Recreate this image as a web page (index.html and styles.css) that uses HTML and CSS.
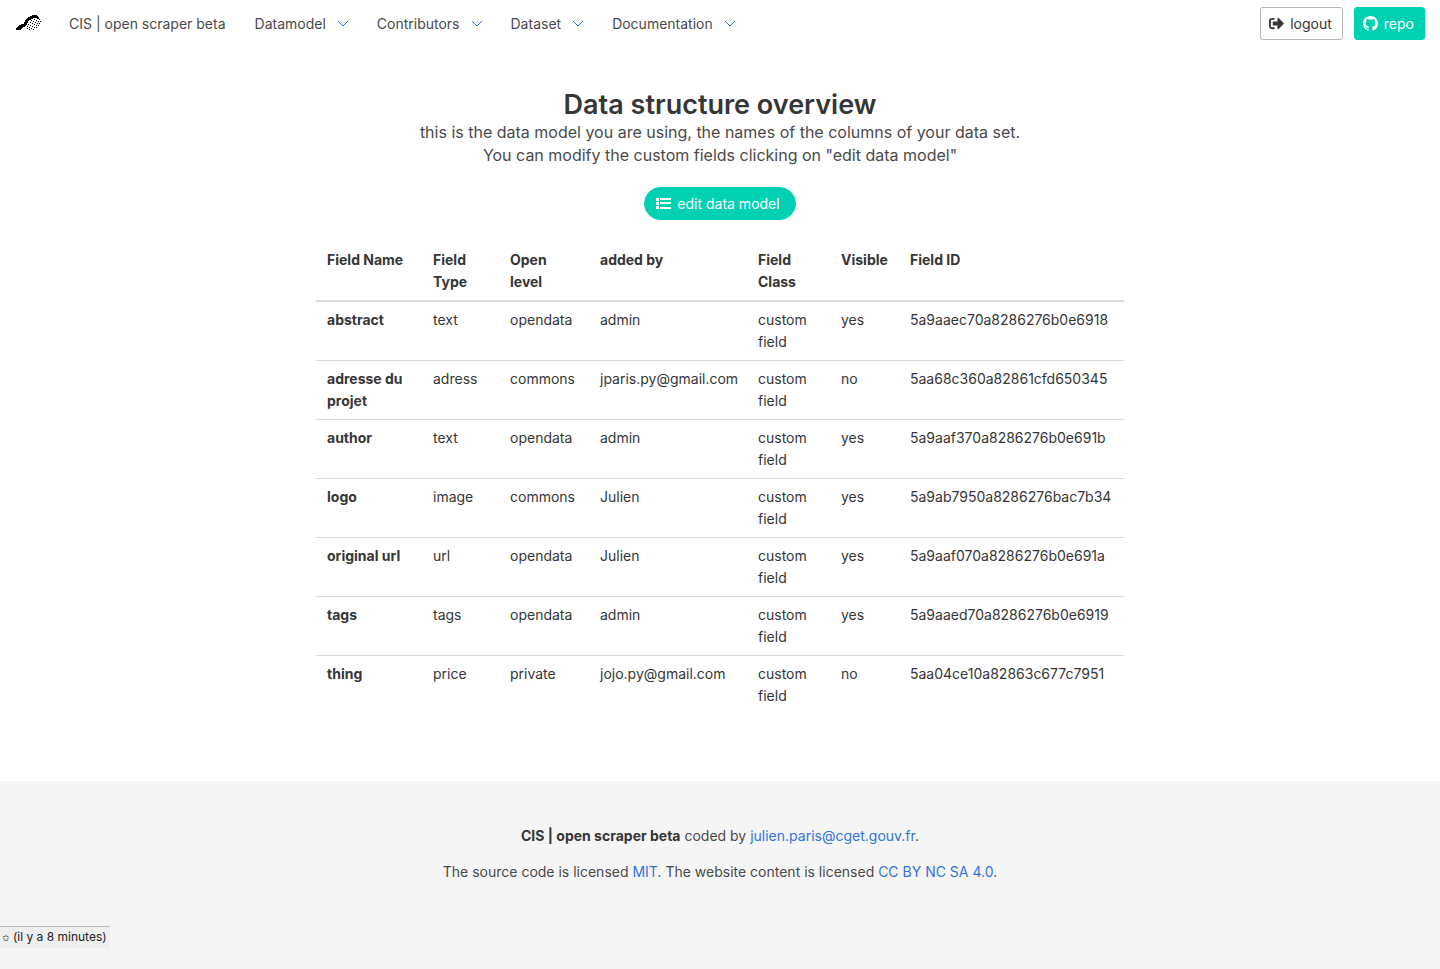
FILE: index.html
```html
<!DOCTYPE html>
<html lang="en">
<head>
<meta charset="utf-8">
<meta name="viewport" content="width=device-width, initial-scale=1">
<title>CIS | open scraper beta</title>
<link rel="stylesheet" href="styles.css">
</head>
<body>
<nav class="navbar" aria-label="Main">
  <a class="navbar-item brand" href="#" aria-label="Home">
    <svg class="brand-logo" viewBox="0 0 25 17" shape-rendering="crispEdges" aria-hidden="true">
      <path d="M16 0h5v1h-5zM14 1h8v1h-8zM12 2h11v1h-11zM11 3h6v1h-6zM21 3h2v1h-2zM10 4h5v1h-5zM9 5h4v1h-4zM9 6h3v1h-3zM8 7h4v1h-4zM8 8h3v1h-3zM5 9h6v1h-6zM3 10h7v1h-7zM2 11h7v1h-7zM1 12h6v1h-6zM0 13h6v1h-6zM0 14h5v1h-5z"/>
      <path d="M18 4h1v1h-1zM20 5h1v1h-1zM23 4h1v1h-1zM24 6h1v1h-1zM15 5h1v1h-1zM17 6h1v1h-1zM22 6h1v1h-1zM14 7h1v1h-1zM19 7h1v1h-1zM21 8h1v1h-1zM23 8h1v1h-1zM16 8h1v1h-1zM12 9h1v1h-1zM18 9h1v1h-1zM14 10h1v1h-1zM20 10h1v1h-1zM22 10h1v1h-1zM11 11h1v1h-1zM16 11h1v1h-1zM18 12h1v1h-1zM20 12h1v1h-1zM13 12h1v1h-1zM11 13h1v1h-1zM15 13h1v1h-1zM17 14h1v1h-1zM13 14h1v1h-1z"/>
    </svg>
  </a>
  <a class="navbar-item" href="#">CIS | open scraper beta</a>
  <a class="navbar-item navbar-link" href="#">Datamodel <svg class="chevron" viewBox="0 0 12 7" aria-hidden="true"><path d="M1 1l5 5 5-5"/></svg></a>
  <a class="navbar-item navbar-link" href="#">Contributors <svg class="chevron" viewBox="0 0 12 7" aria-hidden="true"><path d="M1 1l5 5 5-5"/></svg></a>
  <a class="navbar-item navbar-link" href="#">Dataset <svg class="chevron" viewBox="0 0 12 7" aria-hidden="true"><path d="M1 1l5 5 5-5"/></svg></a>
  <a class="navbar-item navbar-link" href="#">Documentation <svg class="chevron" viewBox="0 0 12 7" aria-hidden="true"><path d="M1 1l5 5 5-5"/></svg></a>
  <div class="navbar-end">
    <a class="button" href="#">
      <svg class="icon" viewBox="0 0 512 512" aria-hidden="true"><path d="M497 273L329 441c-15 15-41 4.500-41-17v-96H152c-13.300 0-24-10.700-24-24v-96c0-13.300 10.700-24 24-24h136V88c0-21.400 25.900-32 41-17l168 168c9.300 9.400 9.300 24.600 0 34zM192 436v-40c0-6.600-5.400-12-12-12H96c-17.700 0-32-14.300-32-32V160c0-17.700 14.300-32 32-32h84c6.600 0 12-5.400 12-12V76c0-6.600-5.400-12-12-12H96c-53 0-96 43-96 96v192c0 53 43 96 96 96h84c6.600 0 12-5.400 12-12z"/></svg>
      <span>logout</span>
    </a>
    <a class="button is-primary" href="#">
      <svg class="icon" viewBox="0 0 16 16" aria-hidden="true"><path d="M8 0C3.580 0 0 3.580 0 8c0 3.540 2.290 6.530 5.470 7.590.4.070.55-.17.55-.38 0-.19-.01-.82-.01-1.490-2.010.37-2.530-.49-2.690-.94-.09-.23-.48-.94-.82-1.130-.28-.15-.68-.52-.01-.53.63-.01 1.080.58 1.230.82.72 1.210 1.870.87 2.330.66.07-.52.28-.87.51-1.070-1.780-.2-3.640-.89-3.640-3.950 0-.87.31-1.590.82-2.150-.08-.2-.36-1.020.08-2.120 0 0 .67-.21 2.200.82.64-.18 1.320-.27 2-.27s1.360.09 2 .27c1.530-1.040 2.200-.82 2.200-.82.44 1.100.16 1.920.08 2.120.51.56.82 1.270.82 2.150 0 3.070-1.870 3.750-3.650 3.950.29.25.54.73.54 1.480 0 1.070-.01 1.930-.01 2.200 0 .21.15.46.55.38A8.010 8.010 0 0 0 16 8c0-4.420-3.580-8-8-8z"/></svg>
      <span>repo</span>
    </a>
  </div>
</nav>

<main class="section">
  <header class="heading">
    <h1 class="title">Data structure overview</h1>
    <p class="subtitle">this is the data model you are using, the names of the columns of your data set.<br>You can modify the custom fields clicking on "edit data model"</p>
    <a class="button is-primary is-rounded" href="#">
      <svg class="icon" viewBox="0 0 15 15" shape-rendering="crispEdges" aria-hidden="true"><path d="M0 2h3v3H0zM0 6h3v3H0zM0 10h3v3H0zM4 2h11v2H4zM4 6h11v2H4zM4 11h11v2H4z"/></svg>
      <span>edit data model</span>
    </a>
  </header>

  <table class="table">
    <colgroup>
      <col class="col-name"><col class="col-type"><col class="col-level"><col class="col-author"><col class="col-class"><col class="col-visible"><col>
    </colgroup>
    <thead>
      <tr><th scope="col">Field Name</th><th scope="col">Field Type</th><th scope="col">Open level</th><th scope="col">added by</th><th scope="col">Field Class</th><th scope="col">Visible</th><th scope="col">Field ID</th></tr>
    </thead>
    <tbody>
      <tr><th scope="row">abstract</th><td>text</td><td>opendata</td><td>admin</td><td>custom field</td><td>yes</td><td>5a9aaec70a8286276b0e6918</td></tr>
      <tr><th scope="row">adresse du projet</th><td>adress</td><td>commons</td><td>jparis.py@gmail.com</td><td>custom field</td><td>no</td><td>5aa68c360a82861cfd650345</td></tr>
      <tr><th scope="row">author</th><td>text</td><td>opendata</td><td>admin</td><td>custom field</td><td>yes</td><td>5a9aaf370a8286276b0e691b</td></tr>
      <tr><th scope="row">logo</th><td>image</td><td>commons</td><td>Julien</td><td>custom field</td><td>yes</td><td>5a9ab7950a8286276bac7b34</td></tr>
      <tr><th scope="row">original url</th><td>url</td><td>opendata</td><td>Julien</td><td>custom field</td><td>yes</td><td>5a9aaf070a8286276b0e691a</td></tr>
      <tr><th scope="row">tags</th><td>tags</td><td>opendata</td><td>admin</td><td>custom field</td><td>yes</td><td>5a9aaed70a8286276b0e6919</td></tr>
      <tr><th scope="row">thing</th><td>price</td><td>private</td><td>jojo.py@gmail.com</td><td>custom field</td><td>no</td><td>5aa04ce10a82863c677c7951</td></tr>
    </tbody>
  </table>
</main>

<footer class="footer">
  <p><strong>CIS | open scraper beta</strong> coded by <a href="#">julien.paris@cget.gouv.fr</a>.</p>
  <p>The source code is licensed <a href="#">MIT</a>. The website content is licensed <a href="#">CC BY NC SA 4.0</a>.</p>
</footer>

<div class="timestamp"><span class="star">✩</span> (il y a 8 minutes)</div>
</body>
</html>
```
FILE: styles.css
```css
* {
  box-sizing: border-box;
}

body {
  margin: 0;
  min-height: 100vh;
  display: flex;
  flex-direction: column;
  background: #fff;
  color: #4a4a4a;
  font-family: Inter, "Liberation Sans", sans-serif;
  font-size: 14px;
  line-height: 22px;
}

a {
  color: #3273dc;
  text-decoration: none;
}

.navbar {
  display: flex;
  align-items: center;
  min-height: 47px;
  padding-right: 15px;
}

.navbar-item {
  display: flex;
  align-items: center;
  padding: 0 14px;
  color: #4a4a4a;
}

.navbar-link {
  gap: 11px;
  padding-left: 15px;
  padding-right: 13px;
}

.brand {
  padding-left: 16px;
}

.brand-logo {
  width: 25px;
  height: 17px;
}

.chevron {
  width: 12px;
  height: 7px;
  fill: none;
  stroke: #3273dc;
  stroke-width: 1;
}

.navbar-end {
  display: flex;
  gap: 11px;
  margin-left: auto;
}

.button {
  display: inline-flex;
  align-items: center;
  gap: 6px;
  height: 33px;
  padding: 0 10px 0 8px;
  border: 1px solid #b5b5b5;
  border-radius: 3px;
  color: #363636;
}

.is-primary {
  border-color: #00d1b2;
  background: #00d1b2;
  color: #fff;
}

.is-rounded {
  padding: 0 15px 0 11px;
  border-radius: 17px;
}

.icon {
  width: 15px;
  height: 15px;
  fill: currentColor;
}

.section {
  width: 100%;
  max-width: 808px;
  margin: 0 auto;
  padding: 42px 0 67px;
}

.heading {
  display: flex;
  flex-direction: column;
  align-items: center;
  text-align: center;
}

.title {
  margin: 0;
  color: #363636;
  font-size: 27px;
  font-weight: 600;
  line-height: 32px;
}

.subtitle {
  margin: 0 0 20px;
  font-size: 16px;
  line-height: 23px;
}

.table {
  width: 100%;
  margin-top: 22px;
  border-collapse: separate;
  border-spacing: 0;
  table-layout: fixed;
  color: #363636;
}

.table th,
.table td {
  padding: 7px 11px;
  border-bottom: 1px solid #dbdbdb;
  text-align: left;
  vertical-align: top;
}

.table thead th {
  border-bottom-width: 2px;
}

.table tbody tr:last-child > * {
  border-bottom: 0;
}

.col-name { width: 106px; }
.col-type { width: 77px; }
.col-level { width: 90px; }
.col-author { width: 158px; }
.col-class { width: 83px; }
.col-visible { width: 69px; }

.footer {
  flex-grow: 1;
  padding: 44px 22px 86px;
  background: #f5f5f5;
  text-align: center;
}

.footer p {
  margin: 0 0 14px;
}

.footer p:last-child {
  margin-bottom: 0;
}

.footer strong {
  color: #363636;
}

.timestamp {
  position: fixed;
  bottom: 21px;
  left: 0;
  padding: 0 3px 0 2px;
  border-top: 1px solid #bbb;
  background: #efefef;
  color: #222;
  font-size: 12px;
  line-height: 20px;
}

.star {
  font-family: "DejaVu Sans", sans-serif;
  font-size: 9px;
}
```
